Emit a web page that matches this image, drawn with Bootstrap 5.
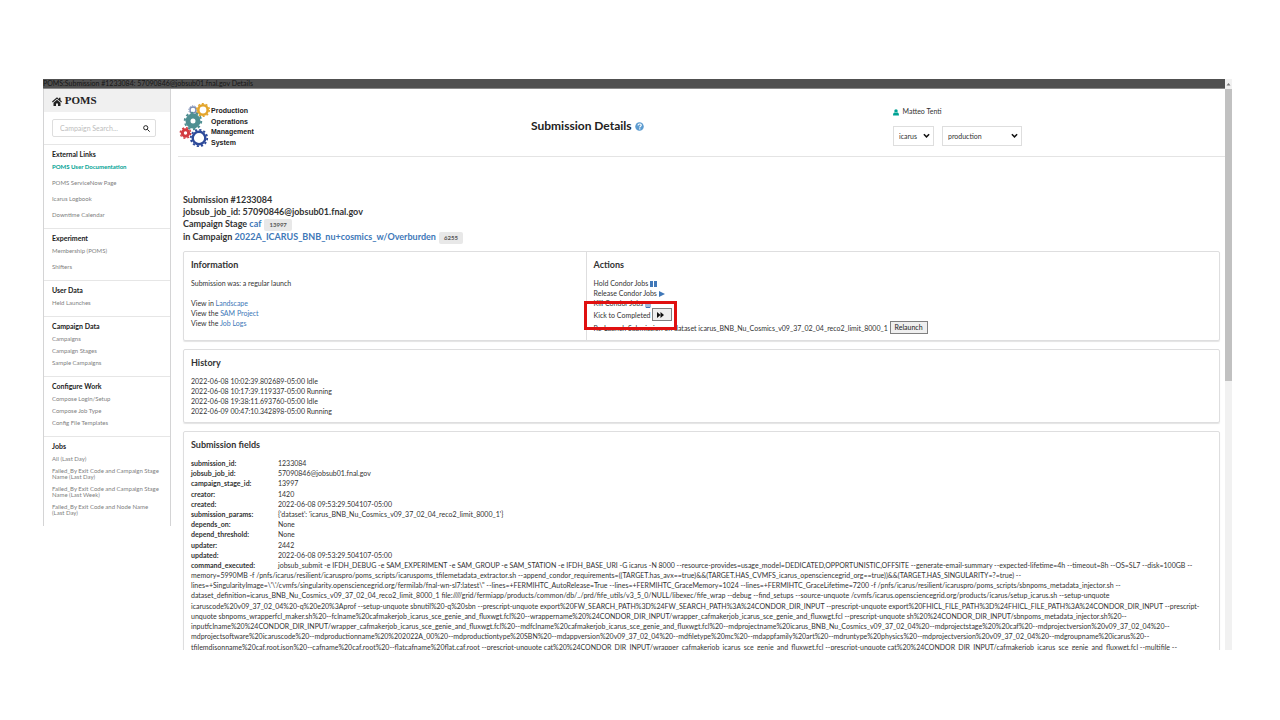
<!DOCTYPE html>
<html lang="en">
<head>
<meta charset="utf-8">
<meta name="viewport" content="width=device-width, initial-scale=1">
<title>POMS Submission Details</title>
<link href="https://cdn.jsdelivr.net/npm/bootstrap@5.3.0/dist/css/bootstrap.min.css" rel="stylesheet">
<style>
  :root { --line: #dededf; --ink: #333; --blue: #4078b8; --teal: #00a294; }
  body { font-family: Lato, "Liberation Sans", sans-serif; font-size: 7px; line-height: 10px; color: var(--ink); background: #fff; }
  a { color: var(--blue); text-decoration: none; }
  .stage { padding: 79px 48px 70px 43px; }
  .main-column, .content-pane { min-width: 0; }
  .titlebar { background: #505050; color: #161616; height: 10px; line-height: 9px; border-bottom: 1px solid #8a8a8a; }
  .sidebar { width: 128px; border: solid #d4d4d5; border-width: 0 1px 0 1px; }
  .brand { background: #f0f0f0; height: 23px; padding: 0 8px; font: bold 11px/23px "Liberation Serif", serif; color: #222; }
  .side-group { border-top: 1px solid #e6e6e6; padding: 4px 8px 7px; font-size: 6px; line-height: 6px; }
  .side-group.roomy { padding-bottom: 5px; }
  .side-group h2 { font-size: 7px; line-height: 10px; font-weight: 700; margin: 0 0 2px; color: #222; }
  .side-group a { display: block; color: #808080; padding: 3px 0; }
  .side-group.roomy a { padding: 5px 0; }
  .side-group.roomy h2 + a { padding-top: 3px; }
  .side-group a.current { color: var(--teal); font-weight: 700; }
  .search-box { border: 1px solid #dedede; border-radius: 2px; height: 18px; margin: 7px 14px 7px 8px; padding: 0 5px 0 7px; }
  .search-box input { font-size: 7px; line-height: 10px; border: 0; outline: 0; padding: 0; min-width: 0; background: none; }
  .search-box input::placeholder { color: #bdbdbd; opacity: 1; }
  .search-box button { border: 0; background: none; padding: 0; line-height: 0; }
  .content-pane { padding-left: 7px; }
  .page-head { border-bottom: 1px solid #e4e4e4; height: 68px; }
  .logo { width: 76px; height: 46px; margin: 14px 0 0 1px; }
  .page-head h1 { font-size: 12px; line-height: 16px; font-weight: 700; margin: 29px 0 0 4px; color: #222; }
  .who { margin: 17px 0 0 17px; }
  .pickers { margin-top: 10px; }
  .picker { appearance: none; border: 1px solid #dedede; border-radius: 0; font-size: 7px; line-height: 10px; height: 20px; padding: 0 12px 0 5px; color: var(--ink); background: #fff url("data:image/svg+xml,%3Csvg xmlns='http://www.w3.org/2000/svg' viewBox='0 0 8 6'%3E%3Cpath d='M1 1l3 3 3-3' fill='none' stroke='%23111' stroke-width='1.7'/%3E%3C/svg%3E") no-repeat right 3px center / 7px 6px; }
  .picker-sm { width: 41px; }
  .picker-lg { width: 80px; }
  .details { padding: 37px 5px 0 5px; }
  .details h2 { font-size: 9px; line-height: 12px; font-weight: 700; margin: 0; color: var(--ink); }
  .ident { margin-bottom: 7px; }
  .chip { display: inline-block; background: #e8e8e8; color: #555; font-size: 6px; line-height: 12px; padding: 0 5px; border-radius: 2px; margin-left: 1px; }
  .panel { border: 1px solid var(--line); border-radius: 2px; box-shadow: 0 1px 1px #e4e4e4; margin-bottom: 8px; }
  .panel h3 { font-size: 9px; line-height: 12px; font-weight: 700; margin: 0 0 7px; color: var(--ink); }
  .panel-body { padding: 7px 7px 6px; }
  .info-side { width: 38.8%; }
  .split { border-left: 1px solid var(--line); }
  .act { border: 1px solid #808080; border-radius: 0; background: #efefef; color: #222; font-size: 7px; line-height: 11px; height: 13px; padding: 0 4px; }
  .act-skip { padding: 0 7px 0 4px; }
  .callout { position: absolute; border: 3px solid #e01010; top: -7px; bottom: -9px; left: -10px; width: 93px; pointer-events: none; }
  .fields { height: 102px; }
  .fields th { width: 87px; font-weight: 700; padding: 0; }
  .fields td { padding: 0; }
  .cmd span { display: block; white-space: nowrap; }
  .cmd span:nth-child(4n) { margin-bottom: 1px; }
  .cmd b { display: inline-block; width: 87px; }
  .scroll-rail { width: 7px; background: #f1f1f1; }
  .scroll-rail i { display: block; height: 292px; background: #c1c1c1; }
</style>
</head>
<body>
<div class="stage vh-100 d-flex overflow-hidden">
  <div class="main-column flex-grow-1 overflow-hidden">
    <div class="titlebar">POMS:Submission #1233084: 57090846@jobsub01.fnal.gov Details</div>
    <div class="d-flex align-items-start">
      <nav class="sidebar flex-shrink-0">
        <div class="brand"><svg width="10" height="9" viewBox="0 0 20 18"><path fill="#222" d="M10 0.500 0 9l1.500 1.800L10 3.700l8.500 7.100L20 9l-3-2.600V1.500h-3v2.400zM10 5.500 3 11.300V18h5v-5h4v5h5v-6.700z"/></svg> POMS</div>
        <form class="search-box d-flex align-items-center">
          <input class="flex-grow-1" type="text" placeholder="Campaign Search..." aria-label="Campaign Search">
          <button type="button" aria-label="Search"><svg width="7" height="7" viewBox="0 0 14 14" fill="none" stroke="#222" stroke-width="2"><circle cx="5.500" cy="5.500" r="4.200"/><path d="m8.700 8.700 4.600 4.600"/></svg></button>
        </form>
        <div class="side-group roomy"><h2>External Links</h2><a class="current" href="#">POMS User Documentation</a><a href="#">POMS ServiceNow Page</a><a href="#">Icarus Logbook</a><a href="#">Downtime Calendar</a></div>
        <div class="side-group roomy"><h2>Experiment</h2><a href="#">Membership (POMS)</a><a href="#">Shifters</a></div>
        <div class="side-group"><h2>User Data</h2><a href="#">Held Launches</a></div>
        <div class="side-group"><h2>Campaign Data</h2><a href="#">Campaigns</a><a href="#">Campaign Stages</a><a href="#">Sample Campaigns</a></div>
        <div class="side-group"><h2>Configure Work</h2><a href="#">Compose Login/Setup</a><a href="#">Compose Job Type</a><a href="#">Config File Templates</a></div>
        <div class="side-group"><h2>Jobs</h2><a href="#">All (Last Day)</a><a href="#">Failed_By Exit Code and Campaign Stage<br>Name (Last Day)</a><a href="#">Failed_By Exit Code and Campaign Stage<br>Name (Last Week)</a><a href="#">Failed_By Exit Code and Node Name<br>(Last Day)</a></div>
      </nav>
      <main class="content-pane flex-grow-1">
        <header class="page-head row g-0">
          <div class="col-4">
            <svg class="logo" viewBox="0 0 76 46" role="img" aria-label="Production Operations Management System">
              <g fill="none">
                <g stroke="#7b8db5"><circle cx="14" cy="7" r="3" stroke-width="1.400"/><circle cx="14" cy="7" r="4.200" stroke-width="1" stroke-dasharray="1.300 1.300"/></g>
                <g stroke="#e3a52c"><circle cx="24" cy="7" r="4.700" stroke-width="2.600"/><circle cx="24" cy="7" r="6.300" stroke-width="1.400" stroke-dasharray="2 1.960"/></g>
                <g stroke="#4f8f92"><circle cx="14" cy="18" r="5" stroke-width="5"/><circle cx="14" cy="18" r="8.200" stroke-width="2" stroke-dasharray="2.500 2.650"/></g>
                <g stroke="#d33b41"><circle cx="6.500" cy="30" r="3.200" stroke-width="3"/><circle cx="6.500" cy="30" r="5.200" stroke-width="1.500" stroke-dasharray="2 2.080"/></g>
                <g stroke="#2d4a9a"><circle cx="20" cy="35" r="6.300" stroke-width="2.400"/><circle cx="20" cy="35" r="8.200" stroke-width="1.800" stroke-dasharray="2.200 2.090"/></g>
              </g>
              <g font-family="Liberation Sans" font-weight="700" font-size="7" fill="#222"><text x="32" y="10">Production</text><text x="32" y="21">Operations</text><text x="32" y="31">Management</text><text x="32" y="42">System</text></g>
            </svg>
          </div>
          <div class="col-4"><h1>Submission Details <svg width="9" height="9" viewBox="0 0 18 18"><circle cx="9" cy="9" r="8.500" fill="#5b9bd0"/><path d="M6 7c0-4 6.500-4 6.500-.5 0 2-3 2.200-3 4.500M9.500 12.500v2.300" stroke="#fff" stroke-width="2.300" fill="none"/></svg></h1></div>
          <div class="col-4"><div class="who">
            <div><svg width="6" height="7" viewBox="0 0 12 14" fill="#00a294"><circle cx="6" cy="4" r="3.500"/><path d="M0 13c0-5 2-6 3.500-6 1.500 1.500 3.500 1.500 5 0C10 7 12 8 12 13z"/></svg>&nbsp; Matteo Tenti</div>
            <div class="pickers d-flex gap-2"><select class="picker picker-sm" aria-label="Experiment"><option>icarus</option></select><select class="picker picker-lg" aria-label="Role"><option>production</option></select></div>
          </div></div>
        </header>
        <div class="details">
          <div class="ident">
            <h2>Submission #1233084</h2>
            <h2>jobsub_job_id: 57090846@jobsub01.fnal.gov</h2>
            <h2>Campaign Stage <a href="#">caf</a> <span class="chip">13997</span></h2>
            <h2>in Campaign <a href="#">2022A_ICARUS_BNB_nu+cosmics_w/Overburden</a> <span class="chip">6255</span></h2>
          </div>
          <section class="panel d-flex">
            <div class="panel-body info-side"><h3>Information</h3>Submission was: a regular launch<br><br>View in <a href="#">Landscape</a><br>View the <a href="#">SAM Project</a><br>View the <a href="#">Job Logs</a></div>
            <div class="panel-body split flex-grow-1"><h3>Actions</h3>
              <div>Hold Condor Jobs <svg width="7" height="6" viewBox="0 0 7 6" fill="#4078b8"><path d="M0 0h3v6H0zM4 0h3v6H4z"/></svg></div>
              <div>Release Condor Jobs <svg width="6" height="6" viewBox="0 0 6 6" fill="#4078b8"><path d="M0 0l6 3L0 6z"/></svg></div>
              <div>Kill Condor Jobs <svg width="6" height="7" viewBox="0 0 6 7" fill="none" stroke="#4078b8"><path d="M0 1.500h6M2 1V.5h2V1M1 2v4.500h4V2M3 3v3"/></svg></div>
              <div class="position-relative d-flex align-items-center">Kick to Completed&nbsp;<button class="act act-skip d-flex align-items-center" type="button" aria-label="Kick to Completed"><svg width="7" height="6" viewBox="0 0 7 6" fill="#111"><path d="M0 0l3.500 3V0L7 3 3.500 6V3L0 6z"/></svg></button><div class="callout"></div></div>
              <div class="d-flex align-items-center">Re-Launch Submission on dataset icarus_BNB_Nu_Cosmics_v09_37_02_04_reco2_limit_8000_1&nbsp;<button class="act" type="button">Relaunch</button></div>
            </div>
          </section>
          <section class="panel"><div class="panel-body"><h3>History</h3>2022-06-08 10:02:39.802689-05:00 Idle<br>2022-06-08 10:17:39.119337-05:00 Running<br>2022-06-08 19:38:11.693760-05:00 Idle<br>2022-06-09 00:47:10.342898-05:00 Running</div></section>
          <section class="panel"><div class="panel-body"><h3>Submission fields</h3>
            <table class="fields">
              <tr><th>submission_id:</th><td>1233084</td></tr>
              <tr><th>jobsub_job_id:</th><td>57090846@jobsub01.fnal.gov</td></tr>
              <tr><th>campaign_stage_id:</th><td>13997</td></tr>
              <tr><th>creator:</th><td>1420</td></tr>
              <tr><th>created:</th><td>2022-06-08 09:53:29.504107-05:00</td></tr>
              <tr><th>submission_params:</th><td>{'dataset': 'icarus_BNB_Nu_Cosmics_v09_37_02_04_reco2_limit_8000_1'}</td></tr>
              <tr><th>depends_on:</th><td>None</td></tr>
              <tr><th>depend_threshold:</th><td>None</td></tr>
              <tr><th>updater:</th><td>2442</td></tr>
              <tr><th>updated:</th><td>2022-06-08 09:53:29.504107-05:00</td></tr>
            </table>
            <div class="cmd">
              <span><b>command_executed:</b>jobsub_submit -e IFDH_DEBUG -e SAM_EXPERIMENT -e SAM_GROUP -e SAM_STATION -e IFDH_BASE_URI -G icarus -N 8000 --resource-provides=usage_model=DEDICATED,OPPORTUNISTIC,OFFSITE --generate-email-summary --expected-lifetime=4h --timeout=8h --OS=SL7 --disk=100GB --</span>
              <span>memory=5990MB -f /pnfs/icarus/resilient/icaruspro/poms_scripts/icaruspoms_tfilemetadata_extractor.sh --append_condor_requirements=((TARGET.has_avx==true)&amp;&amp;(TARGET.HAS_CVMFS_icarus_opensciencegrid_org==true))&amp;&amp;(TARGET.HAS_SINGULARITY=?=true) --</span>
              <span>lines=+SingularityImage=\'\'/cvmfs/singularity.opensciencegrid.org/fermilab/fnal-wn-sl7:latest\" --lines=+FERMIHTC_AutoRelease=True --lines=+FERMIHTC_GraceMemory=1024 --lines=+FERMIHTC_GraceLifetime=7200 -f /pnfs/icarus/resilient/icaruspro/poms_scripts/sbnpoms_metadata_injector.sh --</span>
              <span>dataset_definition=icarus_BNB_Nu_Cosmics_v09_37_02_04_reco2_limit_8000_1 file://///grid/fermiapp/products/common/db/../prd/fife_utils/v3_5_0/NULL/libexec/fife_wrap --debug --find_setups --source-unquote /cvmfs/icarus.opensciencegrid.org/products/icarus/setup_icarus.sh --setup-unquote</span>
              <span>icaruscode%20v09_37_02_04%20-q%20e20%3Aprof --setup-unquote sbnutil%20-q%20sbn --prescript-unquote export%20FW_SEARCH_PATH%3D%24FW_SEARCH_PATH%3A%24CONDOR_DIR_INPUT --prescript-unquote export%20FHICL_FILE_PATH%3D%24FHICL_FILE_PATH%3A%24CONDOR_DIR_INPUT --prescript-</span>
              <span>unquote sbnpoms_wrapperfcl_maker.sh%20--fclname%20cafmakerjob_icarus_sce_genie_and_fluxwgt.fcl%20--wrappername%20%24CONDOR_DIR_INPUT/wrapper_cafmakerjob_icarus_sce_genie_and_fluxwgt.fcl --prescript-unquote sh%20%24CONDOR_DIR_INPUT/sbnpoms_metadata_injector.sh%20--</span>
              <span>inputfclname%20%24CONDOR_DIR_INPUT/wrapper_cafmakerjob_icarus_sce_genie_and_fluxwgt.fcl%20--mdfclname%20cafmakerjob_icarus_sce_genie_and_fluxwgt.fcl%20--mdprojectname%20icarus_BNB_Nu_Cosmics_v09_37_02_04%20--mdprojectstage%20%20caf%20--mdprojectversion%20v09_37_02_04%20--</span>
              <span>mdprojectsoftware%20icaruscode%20--mdproductionname%20%202022A_00%20--mdproductiontype%20SBN%20--mdappversion%20v09_37_02_04%20--mdfiletype%20mc%20--mdappfamily%20art%20--mdruntype%20physics%20--mdprojectversion%20v09_37_02_04%20--mdgroupname%20icarus%20--</span>
              <span>tfilemdjsonname%20caf.root.json%20--cafname%20caf.root%20--flatcafname%20flat.caf.root --prescript-unquote cat%20%24CONDOR_DIR_INPUT/wrapper_cafmakerjob_icarus_sce_genie_and_fluxwgt.fcl --prescript-unquote cat%20%24CONDOR_DIR_INPUT/cafmakerjob_icarus_sce_genie_and_fluxwgt.fcl --multifile --</span>
            </div>
          </div></section>
        </div>
      </main>
    </div>
  </div>
  <div class="scroll-rail flex-shrink-0"><svg class="d-block" width="7" height="10" viewBox="0 0 7 10"><path d="M1.500 6.500h4l-2-2.500z" fill="#777"/></svg><i></i></div>
</div>
<script src="https://cdn.jsdelivr.net/npm/bootstrap@5.3.0/dist/js/bootstrap.bundle.min.js"></script>
</body>
</html>
